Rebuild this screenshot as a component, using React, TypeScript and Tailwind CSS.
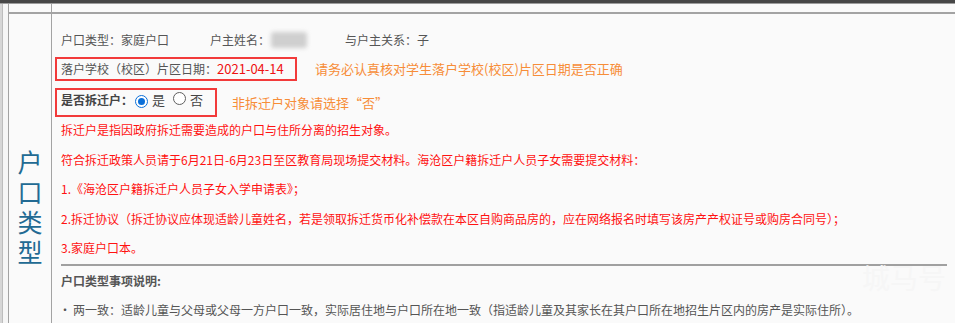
import React from "react";

const font = { fontFamily: '"Noto Sans CJK SC", "Noto Sans", sans-serif' };

function Radio({ checked }: { checked: boolean }) {
  return (
    <span className="inline-flex h-[13px] w-[13px] items-center justify-center rounded-full border border-[#5f5f5f] bg-white data-[on=true]:border-[#0b6fd8]" data-on={checked}>
      {checked && <span className="h-[7px] w-[7px] rounded-full bg-[#0b6fd8]" />}
    </span>
  );
}

const redLines = [
  "拆迁户是指因政府拆迁需要造成的户口与住所分离的招生对象。",
  "符合拆迁政策人员请于6月21日-6月23日至区教育局现场提交材料。海沧区户籍拆迁户人员子女需要提交材料：",
  "1.《海沧区户籍拆迁户人员子女入学申请表》；",
  "2.拆迁协议（拆迁协议应体现适龄儿童姓名，若是领取拆迁货币化补偿款在本区自购商品房的，应在网络报名时填写该房产产权证号或购房合同号）；",
  "3.家庭户口本。",
];

export default function App() {
  return (
    <div className="relative h-[323px] w-[955px] overflow-hidden bg-[#fafafa]" style={font}>
      <div className="h-[3px] bg-[#474747]" />
      <div className="h-[1px] bg-[#9c9c9c]" />
      <div className="flex h-[319px]">
        <div className="flex w-[8px]">
          <div className="w-[2px] bg-[#d6d6d6]" />
          <div className="w-[1px] bg-[#bdbdbd]" />
          <div className="flex-1 bg-[#f6f6f6]" />
        </div>
        <div className="flex flex-1 flex-col border-l border-[#a3a3a3]">
          <div className="flex h-[8px]">
            <div className="w-[43px] border-r border-[#a3a3a3]" />
            <div className="flex-1" />
          </div>
          <div className="h-[2px] bg-[#a3a3a3]" />
          <div className="flex flex-1">
            <div className="flex w-[43px] justify-center border-r border-[#a3a3a3] pt-[132px]">
              <div className="w-[25px] break-all text-[25px] leading-[30px] text-[#226a93]">户口类型</div>
            </div>
            <div className="flex-1 pl-[9px] pr-[8px] text-[12px]">
              <div className="mt-[16px] flex h-[20px] items-center leading-[20px] text-[#555]">
                <span className="w-[149px]">户口类型：家庭户口</span>
                <span>户主姓名：</span>
                <span className="ml-[1px] h-[16px] w-[36px] rounded-[3px] bg-[#cfcfcf] blur-[2px]" />
                <span className="ml-[38px]">与户主关系：子</span>
              </div>
              <div className="mt-[7px] flex items-center">
                <div className="-ml-[6px] flex h-[24px] w-[242px] items-center border-2 border-[#f23a3a] pl-[4px] text-[#555]">
                  落户学校（校区）片区日期：<span className="text-[13px] text-[#ee1111]">2021-04-14</span>
                </div>
                <span className="ml-[18px] text-[13px] text-[#f78d38]">请务必认真核对学生落户学校(校区)片区日期是否正确</span>
              </div>
              <div className="mt-[7px] flex items-center">
                <div className="-ml-[6px] flex h-[29px] w-[162px] items-center border-2 border-[#f23a3a] pb-[6px] pl-[4px] text-[#444]">
                  <span className="font-bold">是否拆迁户：</span>
                  <span className="ml-[2px]"><Radio checked /></span>
                  <span className="ml-[4px] text-[13px]">是</span>
                  <span className="ml-[8px]"><Radio checked={false} /></span>
                  <span className="ml-[4px] text-[13px]">否</span>
                </div>
                <span className="ml-[15px] text-[13px] text-[#f78d38]">非拆迁户对象请选择“否”</span>
              </div>
              <div className="mt-[3px] flex flex-col gap-[9.5px] text-[#ff1212]">
                {redLines.map((t) => (
                  <div key={t} className="h-[20px] whitespace-nowrap leading-[20px]">{t}</div>
                ))}
              </div>
              <div className="mt-[6px] h-[2px] bg-[#a0a0a0]" />
              <div className="mt-[5px] h-[20px] font-bold leading-[20px] text-[#555]">户口类型事项说明:</div>
              <div className="mt-[9px] h-[20px] whitespace-nowrap leading-[20px] text-[#555]">
                <span className="-ml-[2px] mr-[2px]">•</span>两一致：适龄儿童与父母或父母一方户口一致，实际居住地与户口所在地一致（指适龄儿童及其家长在其户口所在地招生片区内的房产是实际住所）。
              </div>
            </div>
          </div>
        </div>
      </div>
      <div className="absolute left-[862px] top-[256px] text-[28px] text-[#f6f6f6]">城马号</div>
    </div>
  );
}
